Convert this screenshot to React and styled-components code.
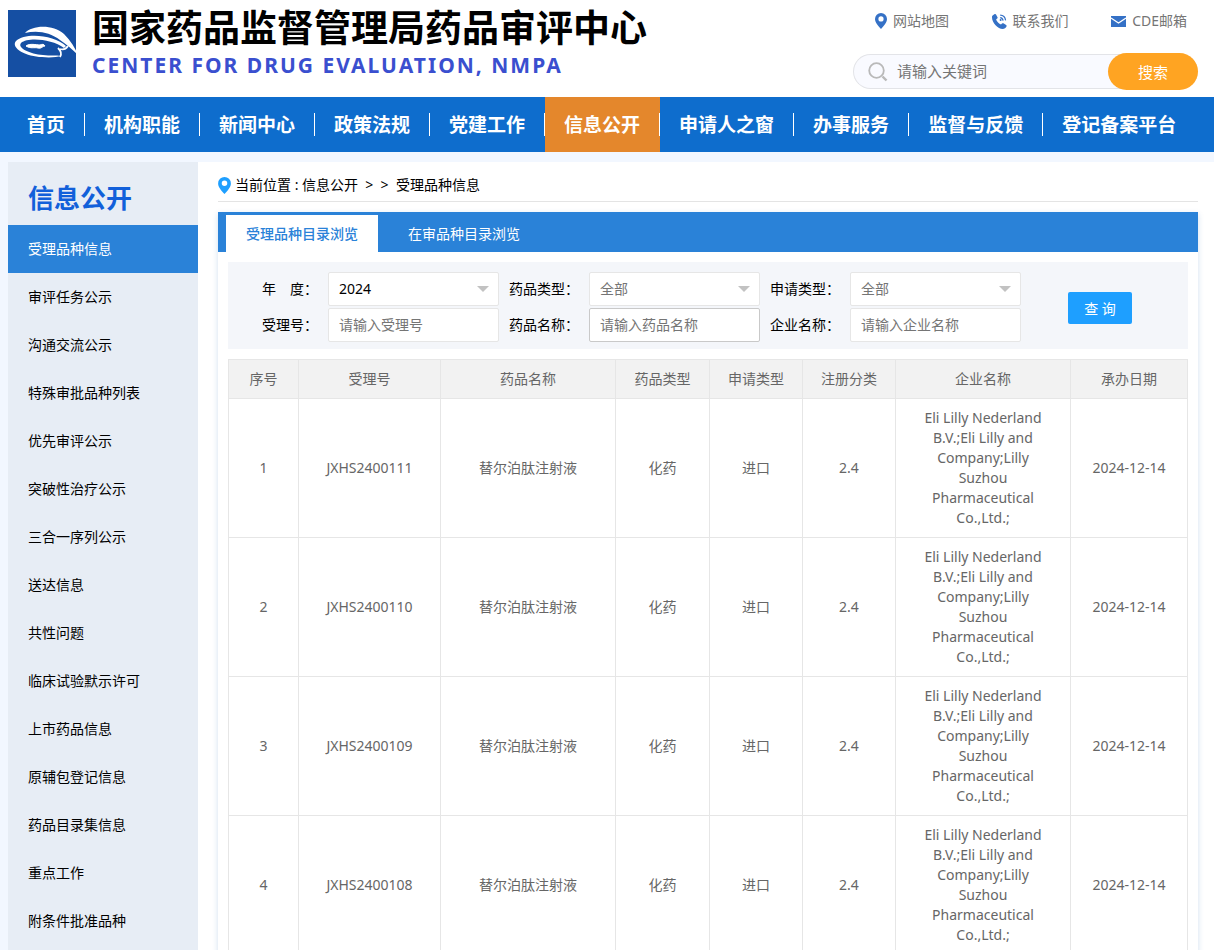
import React from "react";
import styled, { createGlobalStyle } from "styled-components";

const GlobalStyle = createGlobalStyle`
  * {
    box-sizing: border-box;
  }

  body {
    margin: 0;
    background: #fff;
    color: #000;
    font-family: "Noto Sans", "Noto Sans CJK SC", sans-serif;
    font-size: 14px;
    line-height: 20px;
  }

  input,
  select,
  button {
    font-family: inherit;
    font-size: inherit;
  }

  a {
    color: inherit;
    text-decoration: none;
  }

  ul,
  ol {
    margin: 0;
    padding: 0;
    list-style: none;
  }
`;

const Header = styled.header`
  display: flex;
  justify-content: space-between;
  height: 97px;
  padding: 10px 16px 0 8px;
`;

const Brand = styled.a`
  display: flex;
  gap: 14px;

  svg {
    flex: none;
  }
`;

const BrandName = styled.h1`
  margin: 0;
  font-size: 37px;
  line-height: 36px;
  font-weight: 700;
  white-space: nowrap;
`;

const BrandSub = styled.p`
  margin: 4px 0 0;
  color: #3a4fcf;
  font-size: 21px;
  line-height: 30px;
  font-weight: 700;
  letter-spacing: 2px;
  white-space: nowrap;
`;

const HeaderTools = styled.div`
  width: 345px;
`;

const QuickLinks = styled.ul`
  display: flex;
  justify-content: space-between;
  padding: 0 11px 0 22px;
  color: #757575;

  a {
    display: flex;
    align-items: center;
    gap: 6px;
    height: 22px;
  }
`;

const SearchForm = styled.form`
  display: flex;
  align-items: center;
  height: 35px;
  margin-top: 22px;
  padding-left: 14px;
  background: #f9faff;
  border: 1px solid #e3e4e8;
  border-right: 0;
  border-radius: 18px;
`;

const SearchInput = styled.input`
  flex: 1;
  min-width: 0;
  padding: 0 0 2px 9px;
  background: none;
  border: 0;
  outline: 0;
  font-size: 15px;

  &::placeholder {
    color: #757575;
  }
`;

const SearchButton = styled.button`
  width: 90px;
  height: 37px;
  flex: none;
  padding: 0;
  background: #ffa422;
  border: 0;
  border-radius: 19px;
  color: #fff;
  font-size: 15px;
  cursor: pointer;
`;

const Nav = styled.nav`
  background: #0e6dcd;
  border-bottom: 10px solid #f2f7ff;

  ul {
    display: flex;
    height: 55px;
    padding-left: 8px;
  }
`;

const NavLink = styled.a`
  display: flex;
  align-items: center;
  height: 55px;
  padding-left: 19px;
  background: ${({ $active }) => ($active ? "#e4872c" : "transparent")};
  color: #fff;
  font-size: 19px;
  font-weight: 700;
  white-space: nowrap;

  &::after {
    content: "";
    width: 1px;
    height: 23px;
    margin-left: 19px;
    background: #fff;
  }

  li:last-child > &::after {
    background: none;
  }
`;

const Body = styled.div`
  display: flex;
  border-left: 8px solid #f2f7ff;
`;

const Sidebar = styled.aside`
  width: 190px;
  flex: none;
  background: #e7edf5;
`;

const SidebarTitle = styled.h2`
  margin: 0;
  padding: 11px 20px 0;
  height: 63px;
  color: #1260da;
  font-size: 26px;
  line-height: 50px;
  font-weight: 700;
`;

const SidebarLink = styled.a`
  display: block;
  height: 48px;
  padding-left: 20px;
  background: ${({ $active }) => ($active ? "#2a82d8" : "transparent")};
  line-height: 48px;

  && {
    color: ${({ $active }) => ($active ? "#fff" : "#000")};
  }
`;

const Main = styled.main`
  flex: 1;
  min-width: 0;
  padding: 0 16px 0 20px;
`;

const Breadcrumb = styled.nav`
  display: flex;
  align-items: center;
  gap: 4px;
  height: 40px;
  margin-bottom: 10px;
  padding-top: 7px;
  border-bottom: 1px solid #e4e4e4;
  white-space: pre;
`;

const Card = styled.section`
  box-shadow: 0 2px 6px rgba(31, 102, 170, 0.2);
`;

const Tabs = styled.div`
  display: flex;
  gap: 10px;
  height: 40px;
  padding: 3px 8px 0;
  background: #2a82d8;
`;

const Tab = styled.button`
  padding: 0 20px 2px;
  background: ${({ $active }) => ($active ? "#fff" : "transparent")};
  border: 0;
  color: ${({ $active }) => ($active ? "#2a82d8" : "#fff")};
  font-weight: ${({ $active }) => ($active ? 500 : 400)};
  cursor: pointer;
`;

const CardBody = styled.div`
  padding: 10px;
`;

const Filters = styled.form`
  display: flex;
  align-items: center;
  padding: 10px 0 7px;
  background: #f4f6fa;
`;

const FilterGrid = styled.div`
  flex: 1;
  display: grid;
  grid-template-columns: 90px 1fr 70px 1fr 70px 1fr;
  gap: 2px 10px;
  align-items: center;
`;

const Label = styled.label`
  text-align: right;
  white-space: nowrap;
`;

const Input = styled.input`
  width: 100%;
  height: 34px;
  padding: 0 10px 2px;
  background: #fff;
  border: 1px solid ${({ $highlight }) => ($highlight ? "#c9c9c9" : "#e6e6e6")};
  border-radius: 2px;
  outline: 0;

  &::placeholder {
    color: #757575;
  }
`;

const SelectBox = styled.div`
  position: relative;

  svg {
    position: absolute;
    top: 14px;
    right: 10px;
    pointer-events: none;
  }
`;

const Select = styled.select`
  appearance: none;
  display: block;
  width: 100%;
  height: 34px;
  padding: 0 10px 2px;
  background: #fff;
  border: 1px solid #e6e6e6;
  border-radius: 2px;
  color: ${({ $muted }) => ($muted ? "#757575" : "#000")};
  outline: 0;
`;

const QueryButton = styled.button`
  width: 64px;
  height: 32px;
  margin: 1px 56px 0 47px;
  padding: 0;
  background: #1e9fff;
  border: 0;
  border-radius: 2px;
  color: #fff;
  white-space: pre;
  cursor: pointer;
`;

const Table = styled.table`
  width: 100%;
  margin-top: 10px;
  table-layout: fixed;
  border: 1px solid #e6e6e6;
  border-width: 1px 0 0 1px;
  border-spacing: 0;
  color: #666;
  text-align: center;

  th,
  td {
    padding: 9px 15px;
    border: 1px solid #e6e6e6;
    border-width: 0 1px 1px 0;
    font-weight: 400;
    overflow-wrap: break-word;
  }

  th {
    padding: 9px 0;
    background: #f2f2f2;
  }

  td:nth-child(2),
  td:last-child {
    padding: 9px 0;
  }
`;

const NAV_ITEMS = [
  "首页",
  "机构职能",
  "新闻中心",
  "政策法规",
  "党建工作",
  "信息公开",
  "申请人之窗",
  "办事服务",
  "监督与反馈",
  "登记备案平台",
];

const SIDEBAR_ITEMS = [
  "受理品种信息",
  "审评任务公示",
  "沟通交流公示",
  "特殊审批品种列表",
  "优先审评公示",
  "突破性治疗公示",
  "三合一序列公示",
  "送达信息",
  "共性问题",
  "临床试验默示许可",
  "上市药品信息",
  "原辅包登记信息",
  "药品目录集信息",
  "重点工作",
  "附条件批准品种",
];

const COLUMNS = [
  { title: "序号", width: 70 },
  { title: "受理号", width: 142 },
  { title: "药品名称", width: 175 },
  { title: "药品类型", width: 94 },
  { title: "申请类型", width: 93 },
  { title: "注册分类", width: 93 },
  { title: "企业名称", width: 175 },
  { title: "承办日期", width: 117 },
];

const COMPANY =
  "Eli Lilly Nederland B.V.;Eli Lilly and Company;Lilly Suzhou Pharmaceutical Co.,Ltd.;";

const ROWS = ["JXHS2400111", "JXHS2400110", "JXHS2400109", "JXHS2400108"].map(
  (code) => ({
    code,
    name: "替尔泊肽注射液",
    drugType: "化药",
    applyType: "进口",
    category: "2.4",
    company: COMPANY,
    date: "2024-12-14",
  })
);

const Logo = () => (
  <svg width="70" height="67" viewBox="0 0 70 67" aria-hidden="true">
    <rect width="68" height="67" fill="#154fa3" />
    <path
      d="M17 23C24 15 45 14 56 24C63 31 67 38 70 45C64 39 58 34 52 30C42 22 29 20 17 23Z"
      fill="#fff"
    />
    <path
      fillRule="evenodd"
      d="M58 36C47 25 17 22 8 31C2 38 19 47 34 47C42 48 49 47 53 46C48 45 42 46 35 45C22 44 9 38 13 33C20 27 44 29 56 38Z"
      fill="#fff"
    />
    <path
      d="M50 38C53 41 54 44 52 47M52 39C55 40 58 39 60 36"
      fill="none"
      stroke="#fff"
      strokeWidth="1.8"
    />
    <path
      d="M18 36C22 33 28 35 32 35C34 34 36 34 37 36C34 36 34 39 30 38C26 37 23 39 18 36Z"
      fill="#fff"
      stroke="#fff"
    />
  </svg>
);

const PinIcon = ({ color, width = 12, height = 16 }) => (
  <svg width={width} height={height} viewBox="0 0 12 16" aria-hidden="true">
    <path
      fillRule="evenodd"
      fill={color}
      d="M6 0a6 6 0 0 0-6 6c0 3.600 3 6.500 6 10 3-3.500 6-6.400 6-10a6 6 0 0 0-6-6Zm0 3.300a2.600 2.600 0 1 1 0 5.200 2.600 2.600 0 0 1 0-5.200Z"
    />
  </svg>
);

const PhoneIcon = () => (
  <svg width="15" height="15" viewBox="0 0 15 15" aria-hidden="true">
    <path
      fill="#3571c6"
      d="M.6 1.500 2.700.1c.5-.3 1 0 1.300.5l1.500 2.600c.3.600.1 1-.4 1.400l-1 .8c.7 2 2.900 4.300 4.900 5.200l1-1.100c.4-.4.9-.5 1.400-.2l2.700 1.700c.6.4.7.9.4 1.400-.8 1.500-2 2.500-3.800 2.600C6 15 0 8.500 0 3.400 0 2.600 0 2 .6 1.500Z"
    />
    <path
      d="M8.200 1.200c3 .1 5 2.200 5.400 5.200M8.200 3.700c1.600.2 2.600 1.300 2.900 2.900"
      fill="none"
      stroke="#3571c6"
      strokeWidth="1.200"
    />
    <circle cx="8.600" cy="6" r="1" fill="#3571c6" />
  </svg>
);

const MailIcon = () => (
  <svg width="15" height="11" viewBox="0 0 15 11" aria-hidden="true">
    <rect width="15" height="11" fill="#3571c6" />
    <path
      d="M0 2 7.500 7 15 2"
      fill="none"
      stroke="#fff"
      strokeWidth="1.200"
    />
  </svg>
);

const SearchIcon = () => (
  <svg
    width="20"
    height="20"
    viewBox="0 0 20 20"
    fill="none"
    stroke="#b9b9b9"
    aria-hidden="true"
  >
    <circle cx="8.500" cy="8.500" r="7.300" strokeWidth="1.800" />
    <path d="m14.500 14.500 4 4" strokeWidth="2.400" />
  </svg>
);

const Caret = () => (
  <svg width="12" height="6" viewBox="0 0 12 6" aria-hidden="true">
    <path d="M0 0H12L6 6Z" fill="#c2c2c2" />
  </svg>
);

const SelectField = ({ id, label, options, muted }) => (
  <>
    <Label htmlFor={id}>{label}</Label>
    <SelectBox>
      <Select id={id} $muted={muted}>
        {options.map((option) => (
          <option key={option}>{option}</option>
        ))}
      </Select>
      <Caret />
    </SelectBox>
  </>
);

const TextField = ({ id, label, placeholder, highlight }) => (
  <>
    <Label htmlFor={id}>{label}</Label>
    <Input id={id} placeholder={placeholder} $highlight={highlight} />
  </>
);

const App = () => (
  <>
    <GlobalStyle />
    <Header>
      <Brand href="#">
        <Logo />
        <div>
          <BrandName>国家药品监督管理局药品审评中心</BrandName>
          <BrandSub>CENTER FOR DRUG EVALUATION, NMPA</BrandSub>
        </div>
      </Brand>
      <HeaderTools>
        <QuickLinks>
          <li>
            <a href="#map">
              <PinIcon color="#3571c6" />
              网站地图
            </a>
          </li>
          <li>
            <a href="#contact">
              <PhoneIcon />
              联系我们
            </a>
          </li>
          <li>
            <a href="#mail">
              <MailIcon />
              CDE邮箱
            </a>
          </li>
        </QuickLinks>
        <SearchForm onSubmit={(e) => e.preventDefault()}>
          <SearchIcon />
          <SearchInput aria-label="请输入关键词" placeholder="请输入关键词" />
          <SearchButton type="submit">搜索</SearchButton>
        </SearchForm>
      </HeaderTools>
    </Header>
    <Nav>
      <ul>
        {NAV_ITEMS.map((item) => (
          <li key={item}>
            <NavLink href="#" $active={item === "信息公开"}>
              {item}
            </NavLink>
          </li>
        ))}
      </ul>
    </Nav>
    <Body>
      <Sidebar>
        <SidebarTitle>信息公开</SidebarTitle>
        <ul>
          {SIDEBAR_ITEMS.map((item, i) => (
            <li key={item}>
              <SidebarLink href="#" $active={i === 0}>
                {item}
              </SidebarLink>
            </li>
          ))}
        </ul>
      </Sidebar>
      <Main>
        <Breadcrumb>
          <PinIcon color="#1e9fff" width={13} height={17} />
          <span>{"当前位置 : 信息公开  >  >  受理品种信息"}</span>
        </Breadcrumb>
        <Card>
          <Tabs>
            <Tab type="button" $active>
              受理品种目录浏览
            </Tab>
            <Tab type="button">在审品种目录浏览</Tab>
          </Tabs>
          <CardBody>
            <Filters onSubmit={(e) => e.preventDefault()}>
              <FilterGrid>
                <SelectField id="year" label="年　度：" options={["2024"]} />
                <SelectField
                  id="drugType"
                  label="药品类型："
                  options={["全部"]}
                  muted
                />
                <SelectField
                  id="applyType"
                  label="申请类型："
                  options={["全部"]}
                  muted
                />
                <TextField
                  id="code"
                  label="受理号："
                  placeholder="请输入受理号"
                />
                <TextField
                  id="drugName"
                  label="药品名称："
                  placeholder="请输入药品名称"
                  highlight
                />
                <TextField
                  id="company"
                  label="企业名称："
                  placeholder="请输入企业名称"
                />
              </FilterGrid>
              <QueryButton type="submit">查 询</QueryButton>
            </Filters>
            <Table>
              <colgroup>
                {COLUMNS.map(({ title, width }) => (
                  <col key={title} width={width} />
                ))}
              </colgroup>
              <thead>
                <tr>
                  {COLUMNS.map(({ title }) => (
                    <th key={title}>{title}</th>
                  ))}
                </tr>
              </thead>
              <tbody>
                {ROWS.map((row, i) => (
                  <tr key={row.code}>
                    <td>{i + 1}</td>
                    <td>{row.code}</td>
                    <td>{row.name}</td>
                    <td>{row.drugType}</td>
                    <td>{row.applyType}</td>
                    <td>{row.category}</td>
                    <td>{row.company}</td>
                    <td>{row.date}</td>
                  </tr>
                ))}
              </tbody>
            </Table>
          </CardBody>
        </Card>
      </Main>
    </Body>
  </>
);

export default App;
